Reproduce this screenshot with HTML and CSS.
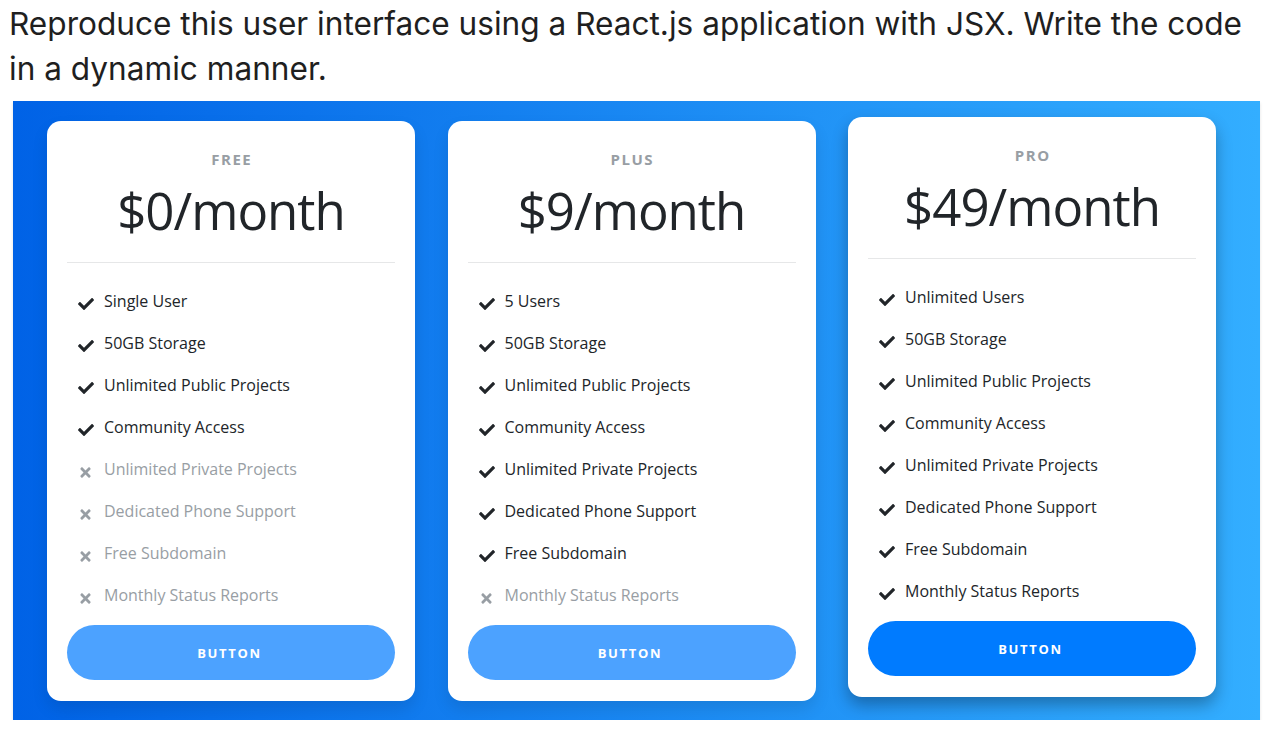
FILE: index.html
```html
<!DOCTYPE html>
<html lang="en">
<head>
<meta charset="utf-8">
<title>Pricing</title>
<link rel="stylesheet" href="styles.css">
</head>
<body>
<p class="prompt">Reproduce this user interface using a React.js application with JSX. Write the code in a dynamic manner.</p>
<section class="pricing">
  <div class="card">
    <h5 class="card-title">FREE</h5>
    <h6 class="card-price">$0/month</h6>
    <hr class="divider">
    <ul class="features">
      <li class="feature"><svg class="ico check" viewBox="0 0 512 512"><path d="M173.898 439.404l-166.4-166.4c-9.997-9.997-9.997-26.206 0-36.204l36.203-36.204c9.997-9.998 26.207-9.998 36.204 0L192 312.69 432.095 72.596c9.997-9.997 26.207-9.997 36.204 0l36.203 36.204c9.997 9.997 9.997 26.206 0 36.204l-294.4 294.401c-9.998 9.997-26.207 9.997-36.204-.001z"/></svg>Single User</li>
      <li class="feature"><svg class="ico check" viewBox="0 0 512 512"><path d="M173.898 439.404l-166.4-166.4c-9.997-9.997-9.997-26.206 0-36.204l36.203-36.204c9.997-9.998 26.207-9.998 36.204 0L192 312.69 432.095 72.596c9.997-9.997 26.207-9.997 36.204 0l36.203 36.204c9.997 9.997 9.997 26.206 0 36.204l-294.4 294.401c-9.998 9.997-26.207 9.997-36.204-.001z"/></svg>50GB Storage</li>
      <li class="feature"><svg class="ico check" viewBox="0 0 512 512"><path d="M173.898 439.404l-166.4-166.4c-9.997-9.997-9.997-26.206 0-36.204l36.203-36.204c9.997-9.998 26.207-9.998 36.204 0L192 312.69 432.095 72.596c9.997-9.997 26.207-9.997 36.204 0l36.203 36.204c9.997 9.997 9.997 26.206 0 36.204l-294.4 294.401c-9.998 9.997-26.207 9.997-36.204-.001z"/></svg>Unlimited Public Projects</li>
      <li class="feature"><svg class="ico check" viewBox="0 0 512 512"><path d="M173.898 439.404l-166.4-166.4c-9.997-9.997-9.997-26.206 0-36.204l36.203-36.204c9.997-9.998 26.207-9.998 36.204 0L192 312.69 432.095 72.596c9.997-9.997 26.207-9.997 36.204 0l36.203 36.204c9.997 9.997 9.997 26.206 0 36.204l-294.4 294.401c-9.998 9.997-26.207 9.997-36.204-.001z"/></svg>Community Access</li>
      <li class="feature muted"><svg class="ico times" viewBox="0 0 352 512"><path d="M242.72 256l100.07-100.07c12.28-12.28 12.28-32.19 0-44.48l-22.24-22.24c-12.28-12.28-32.19-12.28-44.48 0L176 189.28 75.93 89.21c-12.28-12.28-32.19-12.28-44.48 0L9.21 111.45c-12.28 12.28-12.28 32.19 0 44.48L109.28 256 9.21 356.07c-12.28 12.28-12.28 32.19 0 44.48l22.24 22.24c12.28 12.28 32.2 12.28 44.48 0L176 322.72l100.07 100.07c12.28 12.28 32.2 12.28 44.48 0l22.24-22.24c12.28-12.28 12.28-32.19 0-44.48L242.72 256z"/></svg>Unlimited Private Projects</li>
      <li class="feature muted"><svg class="ico times" viewBox="0 0 352 512"><path d="M242.72 256l100.07-100.07c12.28-12.28 12.28-32.19 0-44.48l-22.24-22.24c-12.28-12.28-32.19-12.28-44.48 0L176 189.28 75.93 89.21c-12.28-12.28-32.19-12.28-44.48 0L9.21 111.45c-12.28 12.28-12.28 32.19 0 44.48L109.28 256 9.21 356.07c-12.28 12.28-12.28 32.19 0 44.48l22.24 22.24c12.28 12.28 32.2 12.28 44.48 0L176 322.72l100.07 100.07c12.28 12.28 32.2 12.28 44.48 0l22.24-22.24c12.28-12.28 12.28-32.19 0-44.48L242.72 256z"/></svg>Dedicated Phone Support</li>
      <li class="feature muted"><svg class="ico times" viewBox="0 0 352 512"><path d="M242.72 256l100.07-100.07c12.28-12.28 12.28-32.19 0-44.48l-22.24-22.24c-12.28-12.28-32.19-12.28-44.48 0L176 189.28 75.93 89.21c-12.28-12.28-32.19-12.28-44.48 0L9.21 111.45c-12.28 12.28-12.28 32.19 0 44.48L109.28 256 9.21 356.07c-12.28 12.28-12.28 32.19 0 44.48l22.24 22.24c12.28 12.28 32.2 12.28 44.48 0L176 322.72l100.07 100.07c12.28 12.28 32.2 12.28 44.48 0l22.24-22.24c12.28-12.28 12.28-32.19 0-44.48L242.72 256z"/></svg>Free Subdomain</li>
      <li class="feature muted"><svg class="ico times" viewBox="0 0 352 512"><path d="M242.72 256l100.07-100.07c12.28-12.28 12.28-32.19 0-44.48l-22.24-22.24c-12.28-12.28-32.19-12.28-44.48 0L176 189.28 75.93 89.21c-12.28-12.28-32.19-12.28-44.48 0L9.21 111.45c-12.28 12.28-12.28 32.19 0 44.48L109.28 256 9.21 356.07c-12.28 12.28-12.28 32.19 0 44.48l22.24 22.24c12.28 12.28 32.2 12.28 44.48 0L176 322.72l100.07 100.07c12.28 12.28 32.2 12.28 44.48 0l22.24-22.24c12.28-12.28 12.28-32.19 0-44.48L242.72 256z"/></svg>Monthly Status Reports</li>
    </ul>
    <button class="btn">BUTTON</button>
  </div>

  <div class="card">
    <h5 class="card-title">PLUS</h5>
    <h6 class="card-price">$9/month</h6>
    <hr class="divider">
    <ul class="features">
      <li class="feature"><svg class="ico check" viewBox="0 0 512 512"><path d="M173.898 439.404l-166.4-166.4c-9.997-9.997-9.997-26.206 0-36.204l36.203-36.204c9.997-9.998 26.207-9.998 36.204 0L192 312.69 432.095 72.596c9.997-9.997 26.207-9.997 36.204 0l36.203 36.204c9.997 9.997 9.997 26.206 0 36.204l-294.4 294.401c-9.998 9.997-26.207 9.997-36.204-.001z"/></svg>5 Users</li>
      <li class="feature"><svg class="ico check" viewBox="0 0 512 512"><path d="M173.898 439.404l-166.4-166.4c-9.997-9.997-9.997-26.206 0-36.204l36.203-36.204c9.997-9.998 26.207-9.998 36.204 0L192 312.69 432.095 72.596c9.997-9.997 26.207-9.997 36.204 0l36.203 36.204c9.997 9.997 9.997 26.206 0 36.204l-294.4 294.401c-9.998 9.997-26.207 9.997-36.204-.001z"/></svg>50GB Storage</li>
      <li class="feature"><svg class="ico check" viewBox="0 0 512 512"><path d="M173.898 439.404l-166.4-166.4c-9.997-9.997-9.997-26.206 0-36.204l36.203-36.204c9.997-9.998 26.207-9.998 36.204 0L192 312.69 432.095 72.596c9.997-9.997 26.207-9.997 36.204 0l36.203 36.204c9.997 9.997 9.997 26.206 0 36.204l-294.4 294.401c-9.998 9.997-26.207 9.997-36.204-.001z"/></svg>Unlimited Public Projects</li>
      <li class="feature"><svg class="ico check" viewBox="0 0 512 512"><path d="M173.898 439.404l-166.4-166.4c-9.997-9.997-9.997-26.206 0-36.204l36.203-36.204c9.997-9.998 26.207-9.998 36.204 0L192 312.69 432.095 72.596c9.997-9.997 26.207-9.997 36.204 0l36.203 36.204c9.997 9.997 9.997 26.206 0 36.204l-294.4 294.401c-9.998 9.997-26.207 9.997-36.204-.001z"/></svg>Community Access</li>
      <li class="feature"><svg class="ico check" viewBox="0 0 512 512"><path d="M173.898 439.404l-166.4-166.4c-9.997-9.997-9.997-26.206 0-36.204l36.203-36.204c9.997-9.998 26.207-9.998 36.204 0L192 312.69 432.095 72.596c9.997-9.997 26.207-9.997 36.204 0l36.203 36.204c9.997 9.997 9.997 26.206 0 36.204l-294.4 294.401c-9.998 9.997-26.207 9.997-36.204-.001z"/></svg>Unlimited Private Projects</li>
      <li class="feature"><svg class="ico check" viewBox="0 0 512 512"><path d="M173.898 439.404l-166.4-166.4c-9.997-9.997-9.997-26.206 0-36.204l36.203-36.204c9.997-9.998 26.207-9.998 36.204 0L192 312.69 432.095 72.596c9.997-9.997 26.207-9.997 36.204 0l36.203 36.204c9.997 9.997 9.997 26.206 0 36.204l-294.4 294.401c-9.998 9.997-26.207 9.997-36.204-.001z"/></svg>Dedicated Phone Support</li>
      <li class="feature"><svg class="ico check" viewBox="0 0 512 512"><path d="M173.898 439.404l-166.4-166.4c-9.997-9.997-9.997-26.206 0-36.204l36.203-36.204c9.997-9.998 26.207-9.998 36.204 0L192 312.69 432.095 72.596c9.997-9.997 26.207-9.997 36.204 0l36.203 36.204c9.997 9.997 9.997 26.206 0 36.204l-294.4 294.401c-9.998 9.997-26.207 9.997-36.204-.001z"/></svg>Free Subdomain</li>
      <li class="feature muted"><svg class="ico times" viewBox="0 0 352 512"><path d="M242.72 256l100.07-100.07c12.28-12.28 12.28-32.19 0-44.48l-22.24-22.24c-12.28-12.28-32.19-12.28-44.48 0L176 189.28 75.93 89.21c-12.28-12.28-32.19-12.28-44.48 0L9.21 111.45c-12.28 12.28-12.28 32.19 0 44.48L109.28 256 9.21 356.07c-12.28 12.28-12.28 32.19 0 44.48l22.24 22.24c12.28 12.28 32.2 12.28 44.48 0L176 322.72l100.07 100.07c12.28 12.28 32.2 12.28 44.48 0l22.24-22.24c12.28-12.28 12.28-32.19 0-44.48L242.72 256z"/></svg>Monthly Status Reports</li>
    </ul>
    <button class="btn">BUTTON</button>
  </div>

  <div class="card card-active">
    <h5 class="card-title">PRO</h5>
    <h6 class="card-price">$49/month</h6>
    <hr class="divider">
    <ul class="features">
      <li class="feature"><svg class="ico check" viewBox="0 0 512 512"><path d="M173.898 439.404l-166.4-166.4c-9.997-9.997-9.997-26.206 0-36.204l36.203-36.204c9.997-9.998 26.207-9.998 36.204 0L192 312.69 432.095 72.596c9.997-9.997 26.207-9.997 36.204 0l36.203 36.204c9.997 9.997 9.997 26.206 0 36.204l-294.4 294.401c-9.998 9.997-26.207 9.997-36.204-.001z"/></svg>Unlimited Users</li>
      <li class="feature"><svg class="ico check" viewBox="0 0 512 512"><path d="M173.898 439.404l-166.4-166.4c-9.997-9.997-9.997-26.206 0-36.204l36.203-36.204c9.997-9.998 26.207-9.998 36.204 0L192 312.69 432.095 72.596c9.997-9.997 26.207-9.997 36.204 0l36.203 36.204c9.997 9.997 9.997 26.206 0 36.204l-294.4 294.401c-9.998 9.997-26.207 9.997-36.204-.001z"/></svg>50GB Storage</li>
      <li class="feature"><svg class="ico check" viewBox="0 0 512 512"><path d="M173.898 439.404l-166.4-166.4c-9.997-9.997-9.997-26.206 0-36.204l36.203-36.204c9.997-9.998 26.207-9.998 36.204 0L192 312.69 432.095 72.596c9.997-9.997 26.207-9.997 36.204 0l36.203 36.204c9.997 9.997 9.997 26.206 0 36.204l-294.4 294.401c-9.998 9.997-26.207 9.997-36.204-.001z"/></svg>Unlimited Public Projects</li>
      <li class="feature"><svg class="ico check" viewBox="0 0 512 512"><path d="M173.898 439.404l-166.4-166.4c-9.997-9.997-9.997-26.206 0-36.204l36.203-36.204c9.997-9.998 26.207-9.998 36.204 0L192 312.69 432.095 72.596c9.997-9.997 26.207-9.997 36.204 0l36.203 36.204c9.997 9.997 9.997 26.206 0 36.204l-294.4 294.401c-9.998 9.997-26.207 9.997-36.204-.001z"/></svg>Community Access</li>
      <li class="feature"><svg class="ico check" viewBox="0 0 512 512"><path d="M173.898 439.404l-166.4-166.4c-9.997-9.997-9.997-26.206 0-36.204l36.203-36.204c9.997-9.998 26.207-9.998 36.204 0L192 312.69 432.095 72.596c9.997-9.997 26.207-9.997 36.204 0l36.203 36.204c9.997 9.997 9.997 26.206 0 36.204l-294.4 294.401c-9.998 9.997-26.207 9.997-36.204-.001z"/></svg>Unlimited Private Projects</li>
      <li class="feature"><svg class="ico check" viewBox="0 0 512 512"><path d="M173.898 439.404l-166.4-166.4c-9.997-9.997-9.997-26.206 0-36.204l36.203-36.204c9.997-9.998 26.207-9.998 36.204 0L192 312.69 432.095 72.596c9.997-9.997 26.207-9.997 36.204 0l36.203 36.204c9.997 9.997 9.997 26.206 0 36.204l-294.4 294.401c-9.998 9.997-26.207 9.997-36.204-.001z"/></svg>Dedicated Phone Support</li>
      <li class="feature"><svg class="ico check" viewBox="0 0 512 512"><path d="M173.898 439.404l-166.4-166.4c-9.997-9.997-9.997-26.206 0-36.204l36.203-36.204c9.997-9.998 26.207-9.998 36.204 0L192 312.69 432.095 72.596c9.997-9.997 26.207-9.997 36.204 0l36.203 36.204c9.997 9.997 9.997 26.206 0 36.204l-294.4 294.401c-9.998 9.997-26.207 9.997-36.204-.001z"/></svg>Free Subdomain</li>
      <li class="feature"><svg class="ico check" viewBox="0 0 512 512"><path d="M173.898 439.404l-166.4-166.4c-9.997-9.997-9.997-26.206 0-36.204l36.203-36.204c9.997-9.998 26.207-9.998 36.204 0L192 312.69 432.095 72.596c9.997-9.997 26.207-9.997 36.204 0l36.203 36.204c9.997 9.997 9.997 26.206 0 36.204l-294.4 294.401c-9.998 9.997-26.207 9.997-36.204-.001z"/></svg>Monthly Status Reports</li>
    </ul>
    <button class="btn">BUTTON</button>
  </div>
</section>
</body>
</html>
```

FILE: styles.css
```css
* { box-sizing: border-box; }

body {
  margin: 0;
  background: #ffffff;
  font-family: "Open Sans", "Noto Sans", sans-serif;
  color: #212529;
}

.prompt {
  margin: 1px 0 10px 0;
  padding: 0 9px;
  max-width: 1262px;
  font-family: Inter, "Noto Sans", sans-serif;
  font-size: 31.6px;
  line-height: 45px;
  color: #1f1f1f;
}

.pricing {
  margin-left: 13px;
  width: 1247px;
  height: 619px;
  padding: 20px 0 0 34px;
  background: linear-gradient(to right, #0062e6, #33aeff);
  box-shadow: 0 2px 3px rgba(0, 0, 0, 0.12);
  display: flex;
  align-items: flex-start;
  column-gap: 32.5px;
}

.card {
  width: 368px;
  background: #ffffff;
  border-radius: 14px;
  box-shadow: 0 8px 16px 0 rgba(0, 0, 0, 0.1);
  padding: 28px 20px 21px;
  display: flex;
  flex-direction: column;
}

.card-active {
  margin-top: -4px;
  box-shadow: 0 8px 16px 0 rgba(0, 0, 0, 0.3);
}

.card-title {
  margin: 0;
  text-align: center;
  font-size: 15px;
  line-height: 20px;
  font-weight: 700;
  letter-spacing: 1.5px;
  padding-left: 1.5px;
  color: #989ea4;
}

.card-price {
  margin: 11px 0 0;
  text-align: center;
  font-size: 51px;
  line-height: 60px;
  font-weight: 500;
  letter-spacing: -1px;
  color: #212529;
}

.divider {
  margin: 22px 0 0;
  border: 0;
  height: 1px;
  background: #e6e7e8;
}

.features {
  list-style: none;
  margin: 26px 0 0;
  padding: 0 0 0 37px;
  display: flex;
  flex-direction: column;
  row-gap: 18px;
}

.feature {
  position: relative;
  font-size: 16px;
  line-height: 24px;
  color: #212529;
}

.feature.muted {
  color: #989ea4;
}

.ico {
  position: absolute;
  fill: currentColor;
}

.check {
  left: -26px;
  top: 7px;
  width: 16px;
  height: 16px;
}

.times {
  left: -24px;
  top: 8px;
  width: 11px;
  height: 15px;
}

.btn {
  margin-top: 18px;
  height: 55px;
  border: 0;
  border-radius: 80px;
  background: #4ca2ff;
  color: #ffffff;
  font-family: "Open Sans", "Noto Sans", sans-serif;
  font-size: 13px;
  font-weight: 700;
  letter-spacing: 1.7px;
  padding-left: 3px;
}

.card-active .btn {
  background: #007bff;
}
```
